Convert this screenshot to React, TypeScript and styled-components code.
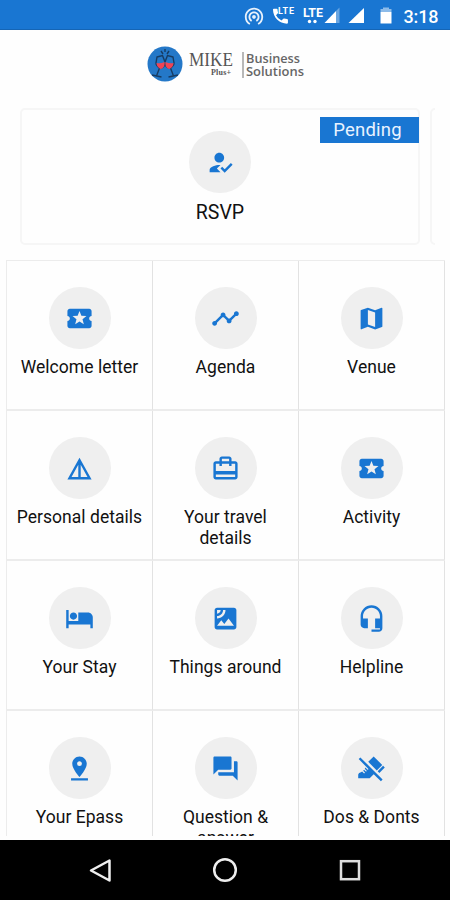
import React from "react";
import styled, { createGlobalStyle } from "styled-components";
import type { IconType } from "react-icons";
import {
  MdCardTravel,
  MdDetails,
  MdDoNotStep,
  MdHeadsetMic,
  MdHotel,
  MdHowToReg,
  MdLocalActivity,
  MdMap,
  MdPinDrop,
  MdQuestionAnswer,
  MdSatellite,
  MdTimeline,
  MdWifiTethering,
} from "react-icons/md";

const BLUE = "#1976d2";

const GlobalStyle = createGlobalStyle`
  * { box-sizing: border-box; }
  body { margin: 0; background: #fff; font-family: Roboto, "Liberation Sans", sans-serif; }
`;

const Screen = styled.div`
  width: 450px;
  height: 900px;
  display: flex;
  flex-direction: column;
  overflow: hidden;
  background: #fefefe;
  color: #111;
`;

const StatusBar = styled.header`
  height: 30px;
  flex: none;
  background: ${BLUE};
  border-bottom: 1px solid #1565b5;
`;

const StatusIcons = styled.svg`
  display: block;
`;

const Brand = styled.div`
  height: 78px;
  flex: none;
  display: flex;
  align-items: flex-start;
  padding: 16px 0 0 147px;
`;

const BrandName = styled.svg`
  display: block;
  flex: none;
  margin-left: 5px;
  font-family: "Liberation Serif", serif;
  fill: #555;
`;

const BrandTag = styled.svg`
  display: block;
  flex: none;
  margin: 6px 0 0 8px;
  border-left: 2px solid #b8b8b8;
  font-family: "Open Sans", sans-serif;
  font-size: 12.5px;
  font-weight: 600;
  fill: #666;
`;

const Carousel = styled.div`
  height: 137px;
  flex: none;
  display: flex;
  gap: 10px;
  width: 435px;
  padding-left: 20px;
  overflow: hidden;
`;

const RsvpCard = styled.section`
  position: relative;
  flex: none;
  width: 400px;
  height: 137px;
  border: 2px solid #f6f6f6;
  border-radius: 5px;
  padding-top: 21px;
  display: flex;
  flex-direction: column;
  align-items: center;
`;

const CardTitle = styled.div`
  margin-top: 8px;
  font-size: 19.5px;
  line-height: 24px;
`;

const Badge = styled.div`
  position: absolute;
  top: 7px;
  right: -1px;
  width: 99px;
  height: 26px;
  padding-right: 4px;
  background: ${BLUE};
  color: #e9f3ff;
  font-size: 18.5px;
  line-height: 27px;
  letter-spacing: 0.2px;
  text-align: center;
`;

const Circle = styled.div`
  flex: none;
  width: 62px;
  height: 62px;
  border-radius: 50%;
  background: #efefef;
  color: ${BLUE};
  display: flex;
  align-items: center;
  justify-content: center;
`;

const GridArea = styled.main`
  flex: none;
  height: 576px;
  margin-top: 15px;
  padding: 0 5px 0 6px;
  overflow: hidden;
`;

const Grid = styled.div`
  width: 439px;
  display: grid;
  grid-template-columns: 146px 146px 146px;
  grid-auto-rows: 150px;
  border-top: 1px solid #ececec;
  border-left: 1px solid #ececec;
`;

const Tile = styled.div`
  border-right: 1px solid #e2e2e2;
  border-bottom: 2px solid #ececec;
  padding-top: 26px;
  display: flex;
  flex-direction: column;
  align-items: center;
`;

const TileLabel = styled.div`
  width: 130px;
  margin-top: 8px;
  font-size: 17.5px;
  line-height: 20.5px;
  letter-spacing: 0.03px;
  text-align: center;
  white-space: pre-line;
`;

const NavBar = styled.nav`
  margin-top: auto;
  height: 60px;
  flex: none;
  display: flex;
  justify-content: space-between;
  align-items: center;
  padding: 0 87px;
  background: #000;
`;

const tiles: { label: string; icon: IconType }[] = [
  { label: "Welcome letter", icon: MdLocalActivity },
  { label: "Agenda", icon: MdTimeline },
  { label: "Venue", icon: MdMap },
  { label: "Personal details", icon: MdDetails },
  { label: "Your travel\ndetails", icon: MdCardTravel },
  { label: "Activity", icon: MdLocalActivity },
  { label: "Your Stay", icon: MdHotel },
  { label: "Things around", icon: MdSatellite },
  { label: "Helpline", icon: MdHeadsetMic },
  { label: "Your Epass", icon: MdPinDrop },
  { label: "Question &\nanswer", icon: MdQuestionAnswer },
  { label: "Dos & Donts", icon: MdDoNotStep },
];

function Status() {
  return (
    <StatusBar>
      <StatusIcons width="450" height="29" viewBox="0 0 450 29" fill="#fff">
        <MdWifiTethering x={243} y={5} size={22} color="#e8f1fb" />
        <path
          transform="translate(270.5 6.2) scale(.83)"
          d="M20 15.500c-1.250 0-2.450-.2-3.570-.57a1 1 0 0 0-1.020.24l-2.200 2.200a15.050 15.050 0 0 1-6.590-6.580l2.200-2.210a.96.96 0 0 0 .25-1A11.360 11.360 0 0 1 8.500 4c0-.55-.45-1-1-1H4c-.55 0-1 .45-1 1 0 9.390 7.610 17 17 17 .55 0 1-.45 1-1v-3.500c0-.55-.45-1-1-1z"
        />
        <text x="278" y="14" fontSize="9" fontWeight="700" textLength="16">LTE</text>
        <text x="303" y="16.500" fontSize="12.500" fontWeight="700" textLength="20" lengthAdjust="spacingAndGlyphs">LTE</text>
        <circle cx="309.500" cy="21.500" r="1.700" />
        <circle cx="315" cy="21.500" r="1.700" />
        <path d="M324.500 23 336 11v12z" />
        <path d="M336 11l3.500-3.500V23H336z" opacity=".35" />
        <path d="M348.500 23 364 8v15z" />
        <path d="M380.500 12h11v11.500h-11z" />
        <path d="M383 7.500h6V9h2.500v3h-11V9h2.500z" opacity=".5" />
        <text x="403.500" y="23" fontSize="18" fontWeight="500" textLength="35">3:18</text>
      </StatusIcons>
    </StatusBar>
  );
}

function Logo() {
  return (
    <svg width="36" height="36" viewBox="0 0 36 36">
      <circle cx="18" cy="18" r="17.500" fill="#2478c8" />
      <g fill="none" stroke="#173c63" strokeWidth="1.400">
        <path d="M10 11 15.500 9.500 18 16c0 4-2 6-5 6-2-1-4-3-4-5zM26 11 20.500 9.500 18 16c0 4 2 6 5 6 2-1 4-3 4-5z" />
        <path d="M12.500 22 9.500 30M23.500 22 26.500 30M5 29l9.500 2M31 29l-9.500 2M14 5l2 3M22 5l-2 3M18 3v3" />
      </g>
      <path
        d="M9.500 17q4 1 8-1c.5 4-1 6.500-4 7-2-1-4-3-4-6zM26.500 17q-4 1-8-1c-.5 4 1 6.500 4 7 2-1 4-3 4-6z"
        fill="#f04455"
      />
    </svg>
  );
}

export default function App() {
  return (
    <>
      <GlobalStyle />
      <Screen>
        <Status />
        <Brand>
          <Logo />
          <BrandName width="46" height="36" viewBox="0 0 46 36">
            <text x="1" y="20" fontSize="18" textLength="44" lengthAdjust="spacingAndGlyphs">MIKE</text>
            <text x="23" y="29" fontSize="8" fontWeight="700" textLength="20">Plus+</text>
          </BrandName>
          <BrandTag width="66" height="26" viewBox="0 0 64 26">
            <text x="2" y="11" textLength="54" lengthAdjust="spacingAndGlyphs">Business</text>
            <text x="2" y="23.500" textLength="58" lengthAdjust="spacingAndGlyphs">Solutions</text>
          </BrandTag>
        </Brand>
        <Carousel>
          <RsvpCard>
            <Badge>Pending</Badge>
            <Circle>
              <MdHowToReg size={29} />
            </Circle>
            <CardTitle>RSVP</CardTitle>
          </RsvpCard>
          <RsvpCard />
        </Carousel>
        <GridArea>
          <Grid>
            {tiles.map(({ label, icon: Icon }) => (
              <Tile key={label}>
                <Circle>
                  <Icon size={29} />
                </Circle>
                <TileLabel>{label}</TileLabel>
              </Tile>
            ))}
          </Grid>
        </GridArea>
        <NavBar>
          <svg width="26" height="26" viewBox="0 0 26 26" fill="none" stroke="#eee" strokeWidth="2.500">
            <path d="M4 13.500 22.500 3.500v20z" strokeLinejoin="round" />
          </svg>
          <svg width="26" height="26" viewBox="0 0 26 26" fill="none" stroke="#eee" strokeWidth="2.500">
            <circle cx="13" cy="13" r="10.800" />
          </svg>
          <svg width="26" height="26" viewBox="0 0 26 26" fill="none" stroke="#ddd" strokeWidth="2.500">
            <rect x="4" y="4.200" width="18" height="18" />
          </svg>
        </NavBar>
      </Screen>
    </>
  );
}
